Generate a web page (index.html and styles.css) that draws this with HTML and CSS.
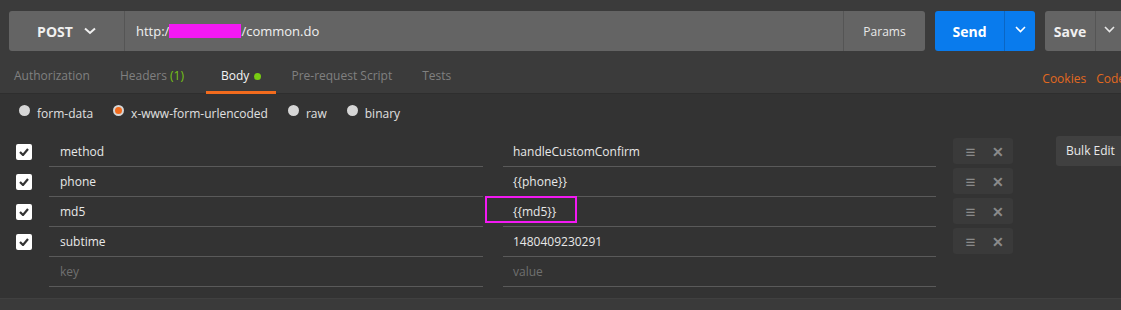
FILE: index.html
```html
<!DOCTYPE html>
<html lang="en">
<head>
    <meta charset="UTF-8">
    <title>Request Builder</title>
    <link rel="stylesheet" href="styles.css">
</head>
<body>
    <div class="top">
        <div class="request-bar">
            <div class="url-group">
                <div class="method">POST
                    <svg class="chev" width="12" height="8" viewBox="0 0 12 8"><path d="M1 1.5 L6 6 L11 1.5" fill="none" stroke="#f0f0f0" stroke-width="2"/></svg>
                </div>
                <div class="url">http:/<span class="redact"></span>/common.do</div>
                <div class="params">Params</div>
            </div>
            <div class="send">
                <span class="send-label">Send</span>
                <span class="send-arrow"><svg width="11" height="7" viewBox="0 0 11 7"><path d="M1 1 L5.5 5.5 L10 1" fill="none" stroke="#fff" stroke-width="1.6"/></svg></span>
            </div>
            <div class="save">
                <span class="save-label">Save</span>
                <span class="save-arrow"><svg width="11" height="7" viewBox="0 0 11 7"><path d="M1 1 L5.5 5.5 L10 1" fill="none" stroke="#e8e8e8" stroke-width="1.6"/></svg></span>
            </div>
        </div>
        <div class="tabs-row">
            <div class="tabs">
                <span class="tab">Authorization</span>
                <span class="tab headers">Headers <span class="count">(1)</span></span>
                <span class="tab active">Body <span class="dot"></span></span>
                <span class="tab">Pre-request Script</span>
                <span class="tab">Tests</span>
            </div>
            <div class="links">
                <span>Cookies</span>
                <span>Code</span>
            </div>
        </div>
    </div>

    <div class="body">
        <div class="modes">
            <label class="mode"><span class="radio"></span>form-data</label>
            <label class="mode"><span class="radio on"></span>x-www-form-urlencoded</label>
            <label class="mode"><span class="radio"></span>raw</label>
            <label class="mode"><span class="radio"></span>binary</label>
        </div>

        <div class="table-wrap">
            <div class="rows">
                <div class="row">
                    <span class="check"><svg width="10" height="8" viewBox="0 0 10 8"><path d="M1 4 L4 7 L9 1" fill="none" stroke="#333" stroke-width="2.2"/></svg></span>
                    <span class="cell key">method</span>
                    <span class="cell value">handleCustomConfirm</span>
                    <span class="actions"><span class="lines">&#8801;</span><span class="x">&#10005;</span></span>
                </div>
                <div class="row">
                    <span class="check"><svg width="10" height="8" viewBox="0 0 10 8"><path d="M1 4 L4 7 L9 1" fill="none" stroke="#333" stroke-width="2.2"/></svg></span>
                    <span class="cell key">phone</span>
                    <span class="cell value">{{phone}}</span>
                    <span class="actions"><span class="lines">&#8801;</span><span class="x">&#10005;</span></span>
                </div>
                <div class="row">
                    <span class="check"><svg width="10" height="8" viewBox="0 0 10 8"><path d="M1 4 L4 7 L9 1" fill="none" stroke="#333" stroke-width="2.2"/></svg></span>
                    <span class="cell key">md5</span>
                    <span class="cell value"><span class="mark"></span>{{md5}}</span>
                    <span class="actions"><span class="lines">&#8801;</span><span class="x">&#10005;</span></span>
                </div>
                <div class="row">
                    <span class="check"><svg width="10" height="8" viewBox="0 0 10 8"><path d="M1 4 L4 7 L9 1" fill="none" stroke="#333" stroke-width="2.2"/></svg></span>
                    <span class="cell key">subtime</span>
                    <span class="cell value">1480409230291</span>
                    <span class="actions"><span class="lines">&#8801;</span><span class="x">&#10005;</span></span>
                </div>
                <div class="row">
                    <span class="check empty"></span>
                    <span class="cell key placeholder">key</span>
                    <span class="cell value placeholder">value</span>
                    <span class="actions empty"></span>
                </div>
            </div>
            <div class="bulk">Bulk Edit</div>
        </div>
    </div>
    <div class="footer"></div>
</body>
</html>
```

FILE: styles.css
```css
body {
    margin: 0;
    background-color: #333333;
    font-family: "Open Sans", "Liberation Sans", sans-serif;
    font-size: 12px;
    color: #e6e6e6;
    overflow: hidden;
    width: 1121px;
    height: 310px;
}

.top {
    background-color: #3b3b3b;
    border-bottom: 1px solid #2e2e2e;
    height: 94px;
    box-sizing: border-box;
}

.request-bar {
    display: flex;
    padding: 11px 0 0 9px;
    height: 40px;
}

.url-group {
    display: flex;
    width: 916px;
    height: 40px;
    background-color: #646464;
    border-radius: 3px;
}

.method {
    width: 116px;
    box-sizing: border-box;
    display: flex;
    align-items: center;
    justify-content: center;
    gap: 11px;
    font-size: 14px;
    font-weight: 700;
    color: #f0f0f0;
    border-right: 1px solid #555555;
}

.url {
    flex: 1;
    display: flex;
    align-items: center;
    padding-left: 11px;
    font-size: 13px;
    color: #f0f0f0;
}

.redact {
    display: inline-block;
    width: 72px;
    height: 14px;
    background-color: #f319f3;
}

.params {
    width: 82px;
    box-sizing: border-box;
    border-left: 1px solid #555555;
    display: flex;
    align-items: center;
    justify-content: center;
    color: #e8e8e8;
}

.send {
    margin-left: 10px;
    width: 100px;
    height: 40px;
    background-color: #097bed;
    border-radius: 3px;
    display: flex;
    color: #ffffff;
    font-size: 14px;
    font-weight: 700;
}

.send-label {
    width: 69px;
    display: flex;
    align-items: center;
    justify-content: center;
    border-right: 1px solid #0a66c4;
}

.send-arrow,
.save-arrow {
    flex: 1;
    display: flex;
    align-items: center;
    justify-content: center;
    padding-bottom: 4px;
}

.save {
    margin-left: 10px;
    flex: 1;
    height: 40px;
    background-color: #646464;
    border-radius: 3px 0 0 3px;
    display: flex;
    color: #f0f0f0;
    font-size: 14px;
    font-weight: 700;
}

.save-label {
    width: 50px;
    display: flex;
    align-items: center;
    justify-content: center;
    border-right: 1px solid #555555;
}

.save-arrow {
    justify-content: flex-start;
    padding-left: 8px;
}

.tabs-row {
    display: flex;
    justify-content: space-between;
    margin-top: 13px;
    height: 30px;
}

.tabs {
    display: flex;
    margin-left: -1px;
}

.tab {
    padding: 0 15px;
    height: 27px;
    line-height: 24px;
    color: #808080;
    border-bottom: 3px solid transparent;
}

.tab.headers {
    margin-right: 7px;
}

.tab.active {
    color: #f4f4f4;
    border-bottom-color: #f26b1d;
}

.count {
    color: #77c414;
}

.dot {
    display: inline-block;
    width: 7px;
    height: 7px;
    border-radius: 50%;
    background-color: #78cc12;
    margin-left: 2px;
    vertical-align: 0;
}

.links {
    display: flex;
    gap: 10px;
    line-height: 30px;
    color: #e2691f;
    margin-right: -4px;
}

.modes {
    display: flex;
    padding: 9px 0 0 19px;
    height: 30px;
    box-sizing: border-box;
}

.mode {
    display: flex;
    align-items: center;
    height: 20px;
    margin-right: 20px;
    color: #e0e0e0;
}

.radio {
    width: 11px;
    height: 11px;
    border-radius: 50%;
    background-color: #d6d6d6;
    margin-right: 7px;
    margin-top: -5px;
    box-sizing: border-box;
}

.radio.on {
    background-color: #f26b1d;
    border: 2px solid #d6d6d6;
}

.table-wrap {
    display: flex;
    padding-top: 13px;
}

.rows {
    display: flex;
    flex-direction: column;
}

.row {
    display: flex;
    align-items: center;
    height: 30px;
}

.check {
    width: 16px;
    height: 16px;
    margin: 0 17px 0 16px;
    background-color: #ffffff;
    border-radius: 2px;
    display: flex;
    align-items: center;
    justify-content: center;
}

.check.empty {
    background-color: transparent;
}

.cell {
    position: relative;
    height: 30px;
    line-height: 29px;
    box-sizing: border-box;
    border-bottom: 1px solid #5a5a5a;
    padding-left: 11px;
    color: #e8e8e8;
}

.key {
    width: 434px;
}

.value {
    width: 433px;
    margin-left: 20px;
    padding-left: 10px;
}

.placeholder {
    color: #707070;
}

.mark {
    position: absolute;
    left: -18px;
    top: -1px;
    width: 92px;
    height: 27px;
    box-sizing: border-box;
    border: 2px solid #f319f3;
}

.actions {
    width: 60px;
    height: 26px;
    margin: -2px 0 0 17px;
    background-color: #3a3a3a;
    border-radius: 3px;
    display: flex;
    align-items: center;
    justify-content: space-around;
    color: #8a8a8a;
    font-size: 15px;
    font-weight: 700;
}

.actions.empty {
    background-color: transparent;
}

.lines {
    font-size: 17px;
    padding-left: 4px;
}

.x {
    font-size: 14px;
}

.bulk {
    margin: -1px 0 0 43px;
    width: 80px;
    height: 30px;
    line-height: 30px;
    padding-left: 10px;
    box-sizing: border-box;
    background-color: #404040;
    border-radius: 3px 0 0 3px;
    color: #e8e8e8;
}

.footer {
    margin-top: 11px;
    height: 14px;
    background-color: #3a3a3a;
    border-top: 1px solid #404040;
}
```
